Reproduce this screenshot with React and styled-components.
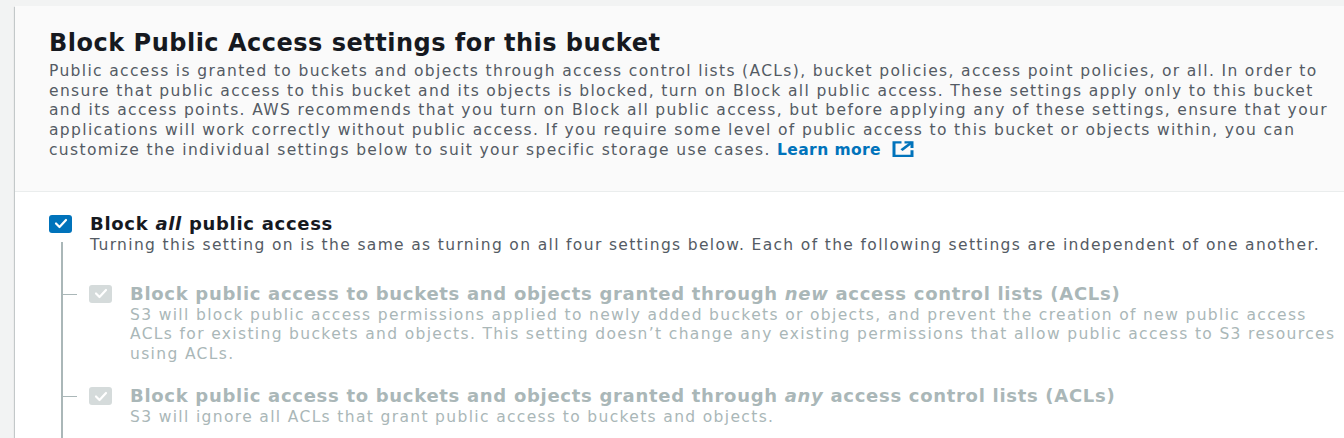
import styled, { createGlobalStyle } from "styled-components";

const GlobalStyle = createGlobalStyle`
    html, body {
        margin: 0;
        overflow: hidden;
        background: #f2f3f3;
        font-family: "DejaVu Sans", "Open Sans", sans-serif;
    }
`

const Page = styled.div`
    padding: 6px 0 0 15px;
`

const Card = styled.section`
    width: 1345px;
    background: #fff;
    box-shadow: 0 1px 1px 0 rgba(0, 28, 36, 0.3), 1px 1px 1px 0 rgba(0, 28, 36, 0.15), -1px 1px 1px 0 rgba(0, 28, 36, 0.15);
`

const CardHeader = styled.header`
    background: #fafafa;
    border-bottom: 1px solid #eaeded;
    padding: 22px 32px 30px 34px;
    h2{
        margin: 0 0 4px;
        font-size: 24px;
        line-height: 30px;
        font-weight: 700;
        letter-spacing: 0.5px;
        color: #16191f;
    }
    p{
        margin: 0;
        font-size: 15.5px;
        line-height: 19.6px;
        letter-spacing: 1.35px;
        color: #545b64;
    }
`

const LearnMore = styled.a`
    color: #0073bb;
    font-weight: 700;
    letter-spacing: 0.4px;
    text-decoration: none;
    white-space: nowrap;
    svg{
        margin-left: 10px;
        vertical-align: -3px;
    }
`

const CardBody = styled.div`
    padding: 20px 23px 0 34px;
`

const Option = styled.div`
    position: relative;
    &::before{
        content: "";
        position: absolute;
        left: 12px;
        top: 30px;
        bottom: 0;
        width: 2px;
        background: #aab7b8;
    }
`

const Row = styled.div`
    display: flex;
    gap: 18px;
`

const Box = styled.span`
    flex: none;
    width: 23px;
    height: 18px;
    margin-top: 3px;
    border-radius: 3px;
    background: ${({ $disabled }) => $disabled ? "#d5dbdb" : "#0073bb"};
    display: flex;
    align-items: center;
    justify-content: center;
`

const TextCol = styled.div`
    display: flex;
    flex-direction: column;
`

const OptionTitle = styled.div`
    font-size: 18px;
    line-height: 24px;
    font-weight: 700;
    letter-spacing: 0.7px;
    color: ${({ $muted }) => $muted ? "#aab7b8" : "#16191f"};
`

const OptionDesc = styled.div`
    font-size: 15.5px;
    line-height: 19.6px;
    letter-spacing: 1.35px;
    color: ${({ $muted }) => $muted ? "#aab7b8" : "#545b64"};
`

const SubList = styled.div`
    display: flex;
    flex-direction: column;
    gap: 20px;
    padding: 26px 0 0 40px;
`

const SubItem = styled.div`
    position: relative;
    &::before{
        content: "";
        position: absolute;
        left: -27px;
        top: 12px;
        width: 15px;
        height: 1px;
        background: #aab7b8;
    }
`

function Checkbox({ disabled }){
    return(
        <Box $disabled={disabled}>
            <svg width="14" height="11" viewBox="0 0 14 11">
                <path d="M2 5.5 L5.5 9 L12 2" fill="none" stroke="#fff" strokeWidth="2.2" strokeLinecap="round" strokeLinejoin="round"/>
            </svg>
        </Box>
    )
}

function ExternalIcon(){
    return(
        <svg width="24" height="18" viewBox="0 0 16 16" preserveAspectRatio="none">
            <g fill="none" stroke="#0073bb" strokeWidth="2">
                <path d="M7 2H2v12h12V9"/>
                <path d="M9 2h5v5"/>
                <path d="M14 2 7 9"/>
            </g>
        </svg>
    )
}

const settings = [
    {
        title: <>Block public access to buckets and objects granted through <i>new</i> access control lists (ACLs)</>,
        desc: "S3 will block public access permissions applied to newly added buckets or objects, and prevent the creation of new public access ACLs for existing buckets and objects. This setting doesn’t change any existing permissions that allow public access to S3 resources using ACLs."
    },
    {
        title: <>Block public access to buckets and objects granted through <i>any</i> access control lists (ACLs)</>,
        desc: "S3 will ignore all ACLs that grant public access to buckets and objects."
    },
    {
        title: <>Block public access to buckets and objects granted through <i>new</i> public bucket or access point policies</>,
        desc: "S3 will block new bucket policies and access point policies that grant public access to buckets and objects. This setting doesn’t change any existing policies that allow public access to S3 resources."
    },
    {
        title: <>Block public and cross-account access to buckets and objects through <i>any</i> public bucket or access point policies</>,
        desc: "S3 will ignore public and cross-account access for buckets or access points with policies that grant public access to buckets and objects."
    }
]

export default function App(){
    return(
        <>
        <GlobalStyle />
        <Page>
            <Card>
                <CardHeader>
                    <h2>Block Public Access settings for this bucket</h2>
                    <p>
                        Public access is granted to buckets and objects through access control lists (ACLs), bucket policies, access point policies, or all. In order to ensure that public access to this bucket and its objects is blocked, turn on Block all public access. These settings apply only to this bucket and its access points. AWS recommends that you turn on Block all public access, but before applying any of these settings, ensure that your applications will work correctly without public access. If you require some level of public access to this bucket or objects within, you can customize the individual settings below to suit your specific storage use cases.{" "}
                        <LearnMore href="#">Learn more<ExternalIcon /></LearnMore>
                    </p>
                </CardHeader>
                <CardBody>
                    <Option>
                        <Row>
                            <Checkbox />
                            <TextCol>
                                <OptionTitle>Block <i>all</i> public access</OptionTitle>
                                <OptionDesc>Turning this setting on is the same as turning on all four settings below. Each of the following settings are independent of one another.</OptionDesc>
                            </TextCol>
                        </Row>
                        <SubList>
                            {settings.map((s, i) => (
                                <SubItem key={i}>
                                    <Row>
                                        <Checkbox disabled />
                                        <TextCol>
                                            <OptionTitle $muted>{s.title}</OptionTitle>
                                            <OptionDesc $muted>{s.desc}</OptionDesc>
                                        </TextCol>
                                    </Row>
                                </SubItem>
                            ))}
                        </SubList>
                    </Option>
                </CardBody>
            </Card>
        </Page>
        </>
    )
}
